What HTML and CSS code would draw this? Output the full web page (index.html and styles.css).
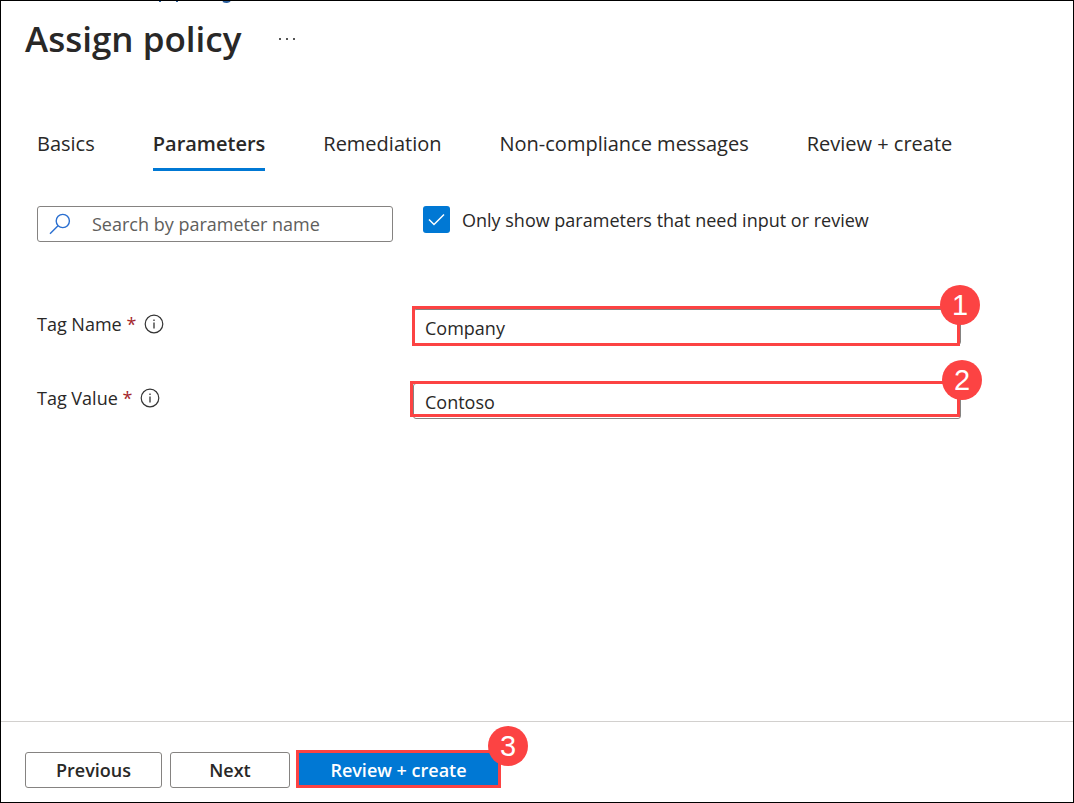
FILE: index.html
```html
<!DOCTYPE html>
<html lang="en">
<head>
<meta charset="utf-8">
<meta name="viewport" content="width=device-width, initial-scale=1">
<title>Assign policy</title>
<link rel="stylesheet" href="styles.css">
</head>
<body>
<div class="page">
  <svg class="crumb-edge" width="240" height="2" viewBox="0 0 240 2" aria-hidden="true"><path d="M159 0v1M176 0v1M222 0q4 2 7 0" stroke="#2b5f9e" stroke-width="2" fill="none"/></svg>
  <header class="header">
    <h1 class="title">Assign policy</h1>
    <button class="more" type="button" aria-label="More actions"><svg width="18" height="4" viewBox="0 0 18 4"><path d="M1 1h2v2H1zM8 1h2v2H8zM15 1h2v2h-2z" fill="#555"/></svg></button>
  </header>
  <main class="main">
    <nav class="tabs" aria-label="Steps">
      <a class="tab" href="#basics">Basics</a>
      <a class="tab tab-active" href="#parameters" aria-current="page">Parameters</a>
      <a class="tab" href="#remediation">Remediation</a>
      <a class="tab" href="#messages">Non-compliance messages</a>
      <a class="tab" href="#review">Review + create</a>
    </nav>
    <div class="filters">
      <label class="search">
        <svg class="search-icon" width="22" height="22" viewBox="0 0 22 22" aria-hidden="true"><circle cx="13.8" cy="8" r="6.6" fill="none" stroke="#2a6fd0" stroke-width="1.4"/><path d="M9 12.8L1 20.8" stroke="#2a6fd0" stroke-width="1.4"/></svg>
        <input class="search-input" type="search" placeholder="Search by parameter name" aria-label="Search by parameter name">
      </label>
      <label class="check">
        <span class="check-box"><input class="check-input" type="checkbox" checked><svg class="check-mark" width="27" height="27" viewBox="0 0 27 27" aria-hidden="true"><path d="M6 13.5l5 5L21 8.500" fill="none" stroke="#fff" stroke-width="1.5"/></svg></span>
        <span>Only show parameters that need input or review</span>
      </label>
    </div>
    <form class="form" id="policy">
      <div class="row">
        <div class="label"><label for="tag-name">Tag Name <span class="required">*</span></label><svg width="20" height="20" viewBox="0 0 20 20" aria-hidden="true"><circle cx="10" cy="10" r="8.800" fill="none" stroke="#333" stroke-width="1.200"/><path d="M10 8.500v6M10 5.500v1.600" stroke="#333" stroke-width="1.300"/></svg></div>
        <div class="field">
          <input class="text-input" id="tag-name" type="text" value="Company">
          <span class="mark mark-name"></span><span class="badge">1</span>
        </div>
      </div>
      <div class="row">
        <div class="label"><label for="tag-value">Tag Value <span class="required">*</span></label><svg width="20" height="20" viewBox="0 0 20 20" aria-hidden="true"><circle cx="10" cy="10" r="8.800" fill="none" stroke="#333" stroke-width="1.200"/><path d="M10 8.500v6M10 5.500v1.600" stroke="#333" stroke-width="1.300"/></svg></div>
        <div class="field">
          <input class="text-input" id="tag-value" type="text" value="Contoso">
          <span class="mark mark-value"></span><span class="badge badge-value">2</span>
        </div>
      </div>
    </form>
  </main>
  <footer class="footer">
    <button class="button button-previous" type="button">Previous</button>
    <button class="button button-next" type="button">Next</button>
    <div class="primary">
      <button class="button button-primary" type="submit" form="policy">Review + create</button>
      <span class="badge badge-primary">3</span>
    </div>
  </footer>
</div>
</body>
</html>
```
FILE: styles.css
```css
* { box-sizing: border-box; }

body {
  margin: 0;
  background: #fff;
  color: #292827;
  font-family: "Open Sans", "Noto Sans", sans-serif;
  font-size: 18px;
  line-height: 24px;
}

input, button { font: inherit; color: inherit; }

.page {
  display: flex;
  flex-direction: column;
  min-height: 100vh;
  border: 1px solid #000;
}

.crumb-edge { display: block; height: 2px; }

.header {
  display: flex;
  align-items: center;
  gap: 33px;
  padding: 12px 24px 0;
}

.title {
  margin: 0;
  font-size: 35px;
  font-weight: 600;
  line-height: 48px;
}

.more {
  display: flex;
  padding: 4px;
  border: 0;
  background: none;
}

.main {
  flex: 1;
  padding: 65px 112px 48px 36px;
}

.tabs {
  display: flex;
  gap: 58px;
  font-size: 20px;
}

.tab {
  padding: 4px 0 12px;
  border-bottom: 3px solid transparent;
  color: inherit;
  text-decoration: none;
  white-space: nowrap;
}

.tab-active {
  border-color: #0078d4;
  font-weight: 600;
}

.filters {
  display: flex;
  align-items: flex-start;
  gap: 30px;
  margin-top: 35px;
}

.search {
  display: flex;
  align-items: center;
  gap: 21px;
  width: 356px;
  height: 36px;
  padding: 0 11px;
  border: 1px solid #858381;
  border-radius: 3px;
}

.search-icon { flex: none; }

.search-input {
  flex: 1;
  min-width: 0;
  padding: 0;
  border: 0;
  outline: 0;
  background: none;
}

.search-input::placeholder { color: #605e5c; opacity: 1; }

.check {
  display: flex;
  align-items: center;
  gap: 12px;
  white-space: nowrap;
}

.check-box { display: grid; }

.check-input, .check-mark { grid-area: 1 / 1; }

.check-input {
  width: 27px;
  height: 27px;
  margin: 0;
  border-radius: 3px;
  background: #0078d4;
  appearance: none;
}

.check-mark { position: relative; pointer-events: none; }

.check-input:not(:checked) + .check-mark { visibility: hidden; }

.form {
  display: grid;
  gap: 38px;
  margin-top: 67px;
}

.row {
  display: grid;
  grid-template-columns: 376px 1fr;
}

.label {
  display: flex;
  align-items: center;
  gap: 8px;
  height: 30px;
}

.required { color: #a4262c; }

.field { position: relative; }

.text-input {
  display: block;
  width: 100%;
  height: 36px;
  padding: 1px 11px 0;
  border: 1px solid #858381;
  border-radius: 3px;
  background: #fff;
}

.mark {
  position: absolute;
  border: 3px solid #fc4343;
  pointer-events: none;
}

.mark-name { inset: -3px 1px -1px -1px; }

.mark-value { inset: -2px 1px 2px -3px; }

.badge {
  position: absolute;
  top: -24px;
  right: -19px;
  width: 40px;
  height: 40px;
  border-radius: 50%;
  background: #fc4343;
  color: #fff;
  font-family: "Liberation Sans", Arial, sans-serif;
  font-size: 29px;
  line-height: 40px;
  text-align: center;
}

.badge-value { top: -23px; right: -21px; }

.footer {
  display: flex;
  align-items: flex-end;
  gap: 8px;
  padding: 28px 24px 14px;
  border-top: 1px solid #d2d0ce;
}

.button {
  height: 36px;
  padding: 0;
  border: 1px solid #858381;
  border-radius: 3px;
  background: #fff;
  font-weight: 600;
}

.button-previous { width: 137px; }

.button-next { width: 120px; }

.primary { position: relative; margin-left: -2px; }

.button-primary {
  display: block;
  width: 205px;
  height: 38px;
  padding-top: 2px;
  border: 3px solid #fc4343;
  border-radius: 0;
  background: #0078d4;
  color: #fff;
}

.badge-primary { right: -27px; }
```
